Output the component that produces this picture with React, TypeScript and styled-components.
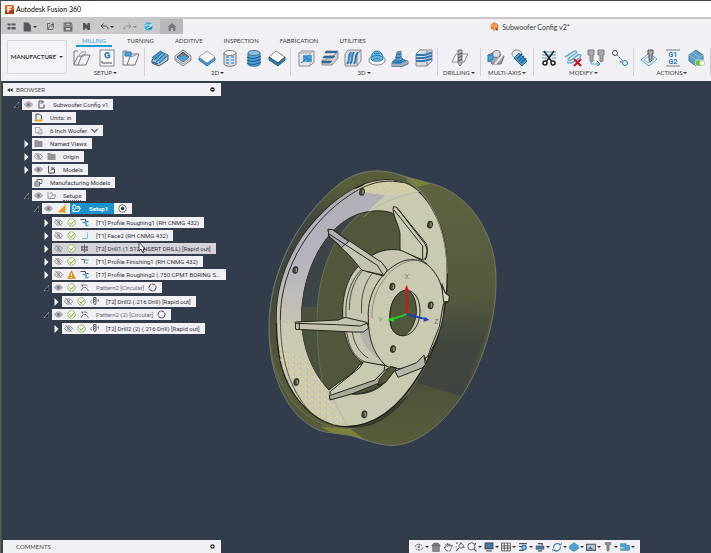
import React from 'react';
import styled, { createGlobalStyle, css } from 'styled-components';

const GlobalStyle = createGlobalStyle`
  * { box-sizing: border-box; }
  html, body { margin: 0; padding: 0; }
  body { background: #333c4a; font-family: Roboto, "Liberation Sans", Arial, sans-serif; font-size: 6px; color: #2c2c30; }
  button { font: inherit; color: inherit; background: none; border: 0; margin: 0; padding: 0; }
  ul { list-style: none; margin: 0; padding: 0; }
  svg { display: block; }
`;

const capsFont = css`
  font-family: Lato, "Liberation Sans", sans-serif;
  font-size: 6px;
  line-height: 8px;
`;

/* ---------- Layout ---------- */

const Window = styled.div`
  display: flex;
  flex-direction: column;
  min-height: 100vh;
  border-top: 1px solid #45424a;
  border-left: 1px solid #5a5d52;
`;

const TitleBar = styled.header`
  display: flex;
  align-items: center;
  gap: 2px;
  height: 18px;
  padding: 0 4px;
  background: #fff;
  border-bottom: 2px solid #c8c6cb;
  color: #000;
  font-family: Lato, "Liberation Sans", sans-serif;
  font-size: 7px;
`;

const QuickBar = styled.div`
  display: flex;
  align-items: stretch;
  height: 15px;
  background: #f1f0f4;
`;

const QuickTools = styled.div`
  display: flex;
  align-items: center;
  width: 159px;
  padding-left: 3px;
  background: #c9c8cb;
`;

const QuickButton = styled.button<{ $wide?: boolean }>`
  display: flex;
  align-items: center;
  justify-content: center;
  gap: 1px;
  width: ${p => (p.$wide ? 23 : 18)}px;
  height: 13px;
`;

const QuickCell = styled(QuickButton)`
  width: 14px;
`;

const HomeTab = styled.button`
  display: flex;
  align-items: center;
  justify-content: center;
  width: 23px;
  background: #b9b8bc;
`;

const DocTab = styled.div`
  flex: 1;
  display: flex;
  align-items: center;
  justify-content: center;
  gap: 3px;
  padding-left: 166px;
  font-family: Lato, "Liberation Sans", sans-serif;
  font-size: 7px;
  color: #38383c;
`;

const Ribbon = styled.div`
  display: grid;
  grid-template-columns: 66px 1fr;
  background: #f1f0f4;
  height: 47px;
`;

const Workspace = styled.button`
  ${capsFont}
  margin: 6px 0 7px 6px;
  display: flex;
  align-items: center;
  justify-content: center;
  gap: 3px;
  font-weight: 700;
  color: #333;
  border: 1px solid #d6d5da;
  border-radius: 2px;
  background: #f4f3f7;
`;

const Tabs = styled.nav`
  display: flex;
  gap: 9px;
  padding-left: 9px;
  height: 13px;
`;

const Tab = styled.button<{ $active?: boolean }>`
  ${capsFont}
  padding: 2px 6px 0;
  height: 13px;
  border-bottom: 2px solid ${p => (p.$active ? '#1f9bd3' : 'transparent')};
  color: ${p => (p.$active ? '#2b9bd0' : '#3c3c40')};
`;

const Groups = styled.div`
  display: grid;
  grid-template-columns: 78fr 146fr 147fr 43fr 53fr 100fr 77fr;
`;

const Group = styled.section`
  height: 28px;
  margin-top: 1px;
  border-right: 1px solid #d3d2d8;
`;

const GroupIcons = styled.div`
  display: flex;
  justify-content: space-between;
  padding: 1px 4px 0 6px;
  & > button:only-child { margin: 0 auto; }
`;

const GroupLabel = styled.button`
  ${capsFont}
  display: flex;
  align-items: center;
  justify-content: center;
  gap: 1px;
  width: 100%;
  margin-top: 2px;
  color: #3c3c40;
`;

const Caret = styled.span<{ $light?: boolean }>`
  width: 0;
  height: 0;
  border: 2px solid transparent;
  border-top-color: ${p => (p.$light ? '#8a898d' : '#333')};
  border-bottom: 0;
`;

const Viewport = styled.main`
  flex: 1;
  display: grid;
  grid-template-columns: 218px minmax(0, 1fr);
  grid-template-rows: auto 1fr auto;
  padding: 2px 0 0 1px;
  background: #333c4a;
  border-left: 1px solid #454d48;
`;

const PanelBar = styled.header`
  ${capsFont}
  display: flex;
  align-items: center;
  height: 13px;
  padding: 0 5px 0 1px;
  background: #f1f0f4;
  color: #4a4a4e;
`;

const PanelTitle = styled.span`
  flex: 1;
`;

const PanelButton = styled.button`
  display: flex;
  justify-content: center;
  width: 8px;
`;

const PanelLead = styled(PanelButton)`
  width: 12px;
`;

const Browser = styled.aside`
  grid-row: 1 / 3;
`;

const Scene = styled.section`
  grid-column: 2;
  grid-row: 1 / 3;
  padding: 77px 0 0 39px;
`;

const NavBar = styled.div`
  grid-column: 2;
  justify-self: start;
  display: flex;
  align-items: center;
  height: 13px;
  margin-left: 188px;
  padding: 0 4px;
  background: #f1f0f4;
`;

const NavButton = styled.button`
  display: flex;
  align-items: center;
  justify-content: center;
  gap: 1px;
  height: 12px;
  padding: 0 1px;
`;

/* ---------- Tree ---------- */

const Tree = styled.ul`
  margin-top: 3px;
  padding-left: 8px;
`;

const SubTree = styled.ul<{ $ops?: boolean }>`
  padding-left: 10px;
  padding-top: ${p => (p.$ops ? 1 : 0)}px;
`;

const Row = styled.div`
  display: flex;
  align-items: center;
  height: 11px;
  margin-bottom: 2px;
`;

const Expander = styled.button`
  width: 11px;
  height: 11px;
  display: flex;
  align-items: center;
  justify-content: center;
  flex: none;
`;

const ExpanderSpace = styled.span`
  width: 11px;
  flex: none;
`;

const NodeBox = styled.div<{ $hover?: boolean }>`
  position: relative;
  display: flex;
  align-items: center;
  gap: 4px;
  height: 11px;
  padding: 0 5px 0 2px;
  background: ${p => (p.$hover ? '#d6d4db' : '#f1f0f4')};
  white-space: nowrap;
`;

const Label = styled.button<{ $muted?: boolean; $dotted?: boolean }>`
  margin-left: 3px;
  line-height: 9px;
  color: ${p => (p.$muted ? '#66666a' : '#333338')};
  border-bottom: ${p => (p.$dotted ? '1px dotted #66666a' : '0')};
`;

const SelectedLabel = styled.button`
  display: flex;
  align-items: center;
  gap: 8px;
  height: 11px;
  padding: 0 6px 0 2px;
  background: #1993cf;
  color: #fff;
  font-weight: 700;
`;

const Pointer = styled.span`
  position: absolute;
  left: 86px;
  top: -2px;
`;

/* ---------- Small glyphs ---------- */

const K = '#4d4d52';
const B = '#4aa3dc';
const D = '#2a78b4';

type SvgProps = { s?: number; children: React.ReactNode };
const Svg = ({ s = 18, children }: SvgProps) => (
  <svg width={s} height={s} viewBox="0 0 18 18" fill="none" stroke={K} strokeWidth="1" aria-hidden="true">{children}</svg>
);

const glyph: Record<string, React.ReactNode> = {
  setup: <><path d="M1 5V2h4M1 5v11h12l4-10H9L5 16M1 15l4-8h4" stroke="#77777c" /><path d="M6 6l3-3h4l-2 4M7 9l5-3" stroke="#9b9ba0" /></>,
  gcode: <><rect x="2" y="1" width="14" height="16" fill="#fafafc" stroke="#88888d" /><path d="M4 12v2h10" /><path d="M11.500 4.500C9.500 3 7 4 7 6.200s3 3.300 4.500 1.800V6.300H9.500" stroke={D} strokeWidth="1.500" /></>,
  stockSetup: <><path d="M1 5V2h4M1 5v11h12l4-11H9L5 16" stroke="#77777c" /><path d="M3 3h6v4H3z" fill={B} stroke={D} /><path d="M9 8l5-2" stroke="#9b9ba0" /></>,
  adaptive: <><path d="M1 11l9-8 7 3v5l-9 6-7-3z" fill="#b7cbd9" /><path d="M1 9l9-7M3 11l9-8M5 13l9-8M8 14l8-7M2 13l5 2" stroke={D} strokeWidth="1.500" /><path d="M3 9l8-7M5 11l8-7M8 12l8-7" stroke={B} /></>,
  pocket: <><path d="M9 1l8 6v4l-8 6-8-6V7z" fill="#dcdce0" stroke="#86868b" /><path d="M9 3l6 5-6 5-6-5z" fill="#6c7f8c" /><path d="M4 8l5 4 5-4M6 8l3 3 3-3M7 7l2 2 2-2" stroke={B} strokeWidth="1.500" /><path d="M1 9l8 6 8-6" stroke="#9a9aa0" /></>,
  face: <><path d="M9 2l8 6-8 6-8-6z" fill="#fbfbfd" stroke="#a0a0a6" /><path d="M1 9l8 6 8-6v2l-8 6-8-6z" fill={B} stroke={D} /></>,
  cylinder: <><path d="M3 4v11c0 3 12 3 12 0V4" fill="#dcdce1" stroke="#77777c" /><ellipse cx="9" cy="4" rx="6" ry="2.500" fill="#f8f8fa" stroke="#77777c" /><path d="M5 8h3m2 0h3M5 11h3m2 0h3M5 14h3m2 0h3" stroke={B} strokeWidth="1.500" /></>,
  thread: <><path d="M3 4v11c0 3 12 3 12 0V4" fill={B} stroke={D} /><ellipse cx="9" cy="4" rx="6" ry="2.500" fill="#83c4ea" stroke="#5c6e7c" /><path d="M2 8c3 2 9 2 14-1M2 11c3 2 9 2 14-1M2 14c3 2 9 2 14-1" stroke="#1c527c" /></>,
  chamfer: <><path d="M8 2l9 6-7 6-9-6z" fill="#fdfdfe" stroke="#88888d" /><path d="M1 8l9 6 7-6v3l-7 6-9-6z" fill={D} stroke="#396279" /></>,
  pocket3d: <><path d="M2 4l3-2h12v11l-4 4H2z" fill="#e8e8ec" stroke="#8a8a90" /><path d="M2 4h11v13M13 4l4-2" stroke="#a2a2a8" /><path d="M6 6h9v7H6z" fill={B} stroke="none" /><path d="M6 8h4l2-2M7 11l4-2v4l3-3M4 14l5-4" stroke={D} /></>,
  parallelSteps: <><path d="M1 16h10l6-7V3l-5 4H8l-3 4H1z" fill="#d0d0d5" stroke="#8a8a90" /><path d="M5 2h12l-2 2H4zM3 7h11l-2 2H2zM1 12h10l-2 2H1z" fill={D} stroke="#35495a" strokeWidth=".5" /></>,
  parallel: <><path d="M1 5l3-4h13v11l-4 5H1z" fill="#dfdfe4" stroke="#8a8a90" /><path d="M13 5v12M13 5l4-4" stroke="#8a8a90" /><path d="M3 15c4-4 0-7 4-12M6 15c4-4 0-7 4-12M10 15c3-4 0-7 4-12" stroke={D} strokeWidth="2" /><path d="M4 13c3-4 1-6 4-10" stroke={B} /></>,
  dome: <><path d="M1 11c0-3 3-4 8-4s8 1 8 4-3 5-8 5-8-2-8-5z" fill="#f8f8fb" stroke="#818188" /><path d="M3 10c0-5 3-8 6-8s6 3 6 8c-2 3-10 3-12 0z" fill="#6cb8e4" stroke={D} /><path d="M4 8c2-2 8-2 10 0M6 5c1-1 5-1 6 0M5 11c2-2 6-2 8 0" stroke={D} /></>,
  ramp: <><path d="M1 13l4-3 1-7 4-1v6l3 3 4 1v3l-7 3H1z" fill={B} stroke="#717980" /><path d="M4 8c3 2 6 0 6-1M3 11c3 2 8 1 9-1M2 13c5 2 9 0 12-2M6 5h4" stroke="#205f90" /><path d="M1 16h9l7-3" stroke="#aaaab0" strokeWidth="2" /></>,
  contour: <><path d="M1 5l4-4h12v11l-5 5H1z" fill="#dcdce1" stroke="#8a8a90" /><path d="M1 6h8c3 0 4-2 8-2M1 9h7c4 0 5-2 9-2M1 12h7c4 0 5-2 9-2" stroke={D} strokeWidth="2" /><path d="M12 13v4M12 2v2" stroke="#77777d" /></>,
  drill: <><path d="M1 13l4-8h12l-4 8z" fill="#fafafc" stroke="#88888d" /><path d="M7 1h4v13l-2 3-2-3z" fill="#b4b4ba" stroke="#77777c" /><path d="M7 6l4-2M7 9l4-2M7 12l4-2" stroke="#4a4a50" /></>,
  swarf: <><path d="M1 6l5-2 11 3-3 8H5z" fill="#9fa4aa" stroke="#66666b" /><path d="M1 6h6l-2 5-4 2z" fill={B} stroke={D} /><path d="M6 3c2-2 6-2 7 0v4c-2 2-6 2-7 0z" fill="#dcdce0" stroke="#77777c" /><path d="M8 15l8-9" stroke="#e9e9ed" strokeWidth="2" /></>,
  multiAxis: <><ellipse cx="6" cy="5" rx="5" ry="4" fill="#e9e9ed" stroke="#88888d" /><path d="M8 4l8 8-5 5-8-8z" fill={B} stroke="#3a6f93" /><path d="M6 10l5-5M8 12l5-5M10 14l5-5" stroke="#1e5d8e" strokeWidth="1.500" /></>,
  trim: <><path d="M2 3h14M2 6h14M2 9h5m5 0h4" stroke="#7dbbe0" strokeWidth="1.500" /><path d="M4 2l8 11M14 2L6 13" stroke="#222" strokeWidth="1.500" /><circle cx="5" cy="14" r="2" stroke="#222" strokeWidth="1.500" /><circle cx="13" cy="14" r="2" stroke="#222" strokeWidth="1.500" /></>,
  deletePass: <><path d="M1 8l8-5c3-2 5 0 2 2L5 9c-2 2 0 3 2 2l7-5c3-1 4 1 1 3l-6 4c-2 2-4 1-6 0" stroke="#62a9d6" strokeWidth="1.500" /><path d="M10 10l7 7M17 10l-7 7" stroke="#d2141c" strokeWidth="2" /></>,
  toolPair: <><path d="M1 1h6v5H6v6l-2 1-1-1V6H1zM11 1h6v5h-1v6l-2 1-1-1V6h-2z" fill="#a7a7ad" stroke="#7c7c81" /><path d="M4 13v2h9" stroke={B} /><path d="M10 12l3 3-3 2" stroke={D} /></>,
  linkPoints: <><circle cx="4" cy="4" r="2.500" /><circle cx="14" cy="14" r="2.500" stroke={D} /><path d="M6 6l6 6M9 13l2-2M11 13h-3" stroke={D} strokeDasharray="2 1" /></>,
  simulate: <><path d="M1 11l8-7 8 6-8 7z" fill="#eef6fb" stroke={B} /><path d="M4 11l5-4 5 3-5 4z" stroke="#77b9df" /><path d="M8 1h5v4h-1v6l-2 2-1-2V5H8z" fill="#a7a7ad" stroke="#55555a" /></>,
  post: <><path d="M2 1h14M2 17h14" stroke="#77777d" /><text x="9" y="8" textAnchor="middle" fontSize="7" fontWeight="700" fill={D} stroke="none">G1</text><text x="9" y="15" textAnchor="middle" fontSize="7" fontWeight="700" fill={D} stroke="none">G2</text></>,
  machine: <><path d="M1 6l7-5 7 5v6l-7 5-7-5z" fill="#5d9fc6" stroke="#457c9e" /><path d="M1 6l7 5 7-5M8 11v5M4 3l7 5" stroke="#8ac1df" /><rect x="7" y="11" width="10" height="6" rx="3" fill="#67c02f" stroke="#fff" strokeWidth=".5" /><circle cx="14" cy="14" r="2.500" fill="#fff" stroke="#b9b9bd" strokeWidth=".5" /></>,

  grid: <path d="M1 3h6v4H1zM9 3h8v4H9zM1 10h6v5H1zM9 10h8v5H9z" fill="#55555a" stroke="none" />,
  file: <path d="M3 1h8l5 5v11H3z" fill="#55555a" stroke="none" />,
  open: <path d="M3 15V3h5l2 2h5M4 15l3-7h9l-3 7zM12 1l4 3-4 2" strokeWidth="1.500" />,
  save: <path d="M2 2h12l2 2v12H2zM5 3v4h8V3M4 16v-6h10v6" stroke="#66666b" strokeWidth="2" />,
  saved: <path d="M2 2h5v3h4V2h5v14h-5l-3-4-3 4H2z" fill="#55555a" stroke="none" />,
  undo: <path d="M7 3L2 8l5 5M2 8h9c4 0 5 3 5 7" strokeWidth="2" />,
  redo: <path d="M11 3l5 5-5 5M16 8H7c-4 0-5 3-5 7" stroke="#8f8e93" strokeWidth="2" />,
  globe: <><circle cx="9" cy="9" r="8" fill="#33a9dc" stroke="none" /><path d="M2 8l6-3 2 2 6-2-3 5-5 1-2 3" stroke="#e9f7fd" strokeWidth="2" /><path d="M10 14l6-3" stroke="#175a87" strokeWidth="2" /></>,
  home: <path d="M9 2l8 7h-2v7h-4v-5H7v5H3V9H1z" fill="#77767b" stroke="none" />,
  logo: <><rect x="0" y="0" width="18" height="18" rx="3" fill="#e8601c" stroke="none" /><path d="M0 12l18-3v9H0z" fill="#a63c10" stroke="none" /><path d="M6 15V4h7M6 9h6" stroke="#fff" strokeWidth="3" /></>,
  box: <><path d="M2 5l7-4 7 4v8l-7 4-7-4z" fill="#ee8b45" stroke="#d8652a" /><path d="M2 5l7 4 7-4M9 9v8" stroke="#fbd3b4" /><path d="M11 11l6 5-4 1z" fill="#444" stroke="none" /></>,

  eye: <><path d="M1 9c4-7 12-7 16 0-4 7-12 7-16 0z" fill="#b5b4ba" stroke="#a09fa5" strokeWidth="2" /><circle cx="9" cy="9" r="3" fill="#77777d" stroke="none" /></>,
  eyeOff: <><path d="M1 9c4-7 12-7 16 0-4 7-12 7-16 0z" stroke="#8b8a90" strokeWidth="2" /><circle cx="9" cy="9" r="2.500" stroke="#8b8a90" strokeWidth="2" /><path d="M3 2l12 14" stroke="#8b8a90" strokeWidth="2" /></>,
  check: <><circle cx="9" cy="9" r="7.500" fill="#f3f8e8" stroke="#8eb85a" strokeWidth="2" strokeDasharray="5 1" /><path d="M5 9l3 4 7-8" stroke="#7dab45" strokeWidth="2" /></>,
  warn: <><path d="M9 1l8 16H1z" fill="#ee921c" stroke="#e18a18" /><path d="M9 7v5M9 14v2" stroke="#fff" strokeWidth="2" /></>,
  corner: <path d="M17 1v16H1z" fill="#f0981f" stroke="none" />,
  folder: <path d="M1 2h6l2 2h8v12H1z" fill="#949398" stroke="none" />,
  doc: <path d="M4 15V2h8v4M3 16h8M14 9v7h-3M7 6h4" strokeWidth="2" stroke="#4c4c50" />,
  units: <><path d="M4 13V2h7l4 4v7" strokeWidth="2" stroke="#4c4c50" /><path d="M1 15h16" stroke="#d3ae1c" strokeWidth="4" /></>,
  config: <><path d="M3 3h9v11H3zM12 7h4v9H9" strokeWidth="1.500" stroke="#9a999e" /><path d="M6 14l4-3" /></>,
  models: <path d="M3 2v14h12V8h-5V3M7 11l4-3 4-3" strokeWidth="2" stroke="#4c4c50" />,
  mfg: <path d="M2 8h9v8H2zM6 8V3h10v6M11 11h5M3 12h7" strokeWidth="2" stroke="#66666b" />,
  setups: <path d="M2 2v13h13l2-7h-6l-5 7M5 5l4-2 2 4" strokeWidth="1.500" stroke="#77777c" />,
  setupWhite: <path d="M2 2h5v3M2 2v13h11l4-7H7l-5 7M9 5h6v3" stroke="#fff" strokeWidth="2" />,
  rough: <><path d="M1 3h10v4h6" stroke="#55555a" strokeWidth="2" /><path d="M5 9h7v6h5" stroke={B} strokeWidth="3" /></>,
  facing: <><path d="M4 15h10" stroke="#aaa" /><path d="M15 3v12H5" stroke="#7fc6ee" strokeWidth="2" /></>,
  hole: <><path d="M9 1v16M4 4v10M14 4v10M2 6h14M2 12h14" strokeWidth="2" stroke="#55555a" /><path d="M9 4l4 4M5 9l6 6" strokeWidth="2" stroke="#77777c" /></>,
  finish: <><path d="M2 5h7v8" stroke="#77777c" strokeWidth="2" /><path d="M10 6h7M11 12h5" stroke={B} strokeWidth="2" /></>,
  pattern: <path d="M2 4h3v3M4 6c4-3 7-3 11 0M6 9l-4 7M12 9l5 7M7 9h5" strokeWidth="1.500" stroke="#55555a" />,
  drillSmall: <><path d="M7 1h5v11l-2 4-3-4zM7 6l5-3M7 10l5-3" strokeWidth="2" stroke="#66666b" /><path d="M5 6L1 9l2 4M14 7l3-2v5" stroke="#4f7fa3" strokeWidth="1.500" /></>,
  chevron: <path d="M1 5l8 8 8-8" stroke="#66666b" strokeWidth="3" />,
  ring: <circle cx="9" cy="9" r="7" stroke="#444448" strokeWidth="2" strokeDasharray="9 1" />,
  target: <><circle cx="9" cy="9" r="7.500" stroke="#444448" strokeWidth="1.500" fill="#fff" /><circle cx="9" cy="9" r="3.500" fill="#2a2a2e" stroke="none" /></>,
  minus: <><circle cx="9" cy="9" r="8" fill="#29292d" stroke="none" /><path d="M5 9h8" stroke="#fff" strokeWidth="3" /></>,
  plus: <><circle cx="9" cy="9" r="8" fill="#29292d" stroke="none" /><path d="M5 9h8M9 5v8" stroke="#fff" strokeWidth="3" /></>,
  rewind: <path d="M9 3v12L1 9zM17 3v12L9 9z" fill="#29292d" stroke="none" />,

  orbit: <path d="M2 9c0-5 9-7 13-2M16 10c-1 5-9 6-13 2M9 6v6M6 9h6" strokeWidth="1.500" strokeDasharray="5 1" />,
  look: <path d="M3 6h12v11H3zM1 7l4-5h8l4 5z" fill="#85858a" stroke="#55555a" />,
  pan: <path d="M6 16l-4-7 3 1V4l3 4V2l3 6 1-5 2 5 3-3-4 11z" strokeDasharray="4 1" strokeWidth="1.500" />,
  zoom: <><path d="M2 16l5-5M2 2h3M9 2h3M16 8v3M2 8v2" strokeWidth="2" /><circle cx="11" cy="7" r="4" strokeWidth="1.500" /></>,
  fit: <><circle cx="8" cy="8" r="6.500" strokeWidth="1.500" /><path d="M13 13l4 4M15 2v3" strokeWidth="2" /></>,
  display: <><path d="M2 2h14v10H2z" fill="#4778a6" stroke="#3b4857" strokeWidth="2" /><path d="M4 16h10" strokeWidth="2" /></>,
  table: <path d="M1 2h16v14H1zM1 7h16M1 11h16M6 2v14M12 2v14" strokeWidth="1.500" />,
  inspect: <><path d="M2 3h14M2 8h9M2 15h8" strokeWidth="2" /><circle cx="11" cy="10" r="4" fill="#96c5e1" stroke={D} strokeWidth="2" /></>,
  stock: <><path d="M2 7h14v6H2z" fill="#4778a6" stroke="#3b4857" /><path d="M5 3h8v3M5 16h8" strokeWidth="2" /></>,
  cycle: <><path d="M15 5A7 7 0 0 0 3 11M3 14a7 7 0 0 0 12-6" stroke={D} strokeWidth="2" /><path d="M12 5h5V1M6 13H1v4" stroke="#55555a" /></>,
  diamond: <path d="M9 1l8 6v5l-8 5-8-5V7z" fill="#4ca2d6" stroke="#387ba6" />,
  image: <><path d="M1 4h16v11H1z" fill="#bcc8cf" stroke="#55555a" strokeWidth="2" /><path d="M3 13l5-5 5 5" fill={D} stroke="none" /></>,
  tool: <path d="M4 1h10v4h-3v10l-2 2-2-2V5H4z" fill="#8b8b91" stroke="#66666b" />,
  flag: <path d="M1 3h10v3h6v9H1v-3h8V9H1z" fill={B} stroke="#36739b" />,
};

const Glyph = ({ name, s }: { name: string; s?: number }) => <Svg s={s}>{glyph[name]}</Svg>;

/* ---------- Data ---------- */

const tabs = ['MILLING', 'TURNING', 'ADDITIVE', 'INSPECTION', 'FABRICATION', 'UTILITIES'];

const groups: { label: string; icons: string[] }[] = [
  { label: 'SETUP', icons: ['setup', 'gcode', 'stockSetup'] },
  { label: '2D', icons: ['adaptive', 'pocket', 'face', 'cylinder', 'thread', 'chamfer'] },
  { label: '3D', icons: ['pocket3d', 'parallelSteps', 'parallel', 'dome', 'ramp', 'contour'] },
  { label: 'DRILLING', icons: ['drill'] },
  { label: 'MULTI-AXIS', icons: ['swarf', 'multiAxis'] },
  { label: 'MODIFY', icons: ['trim', 'deletePass', 'toolPair', 'linkPoints'] },
  { label: 'ACTIONS', icons: ['simulate', 'post', 'machine'] },
];

type TreeNode = {
  label: string;
  icons: string[];
  open?: boolean;
  closed?: boolean;
  after?: string;
  hover?: boolean;
  muted?: boolean;
  dotted?: boolean;
  selected?: boolean;
  ops?: boolean;
  children?: TreeNode[];
};

const tree: TreeNode = {
  label: 'Subwoofer Config v1', icons: ['eye', 'doc'], open: true, children: [
    { label: 'Units: in', icons: ['units'] },
    { label: '6 Inch Woofer', icons: ['config'], after: 'chevron' },
    { label: 'Named Views', icons: ['folder'], closed: true },
    { label: 'Origin', icons: ['eyeOff', 'folder'], closed: true },
    { label: 'Models', icons: ['eye', 'models'], closed: true },
    { label: 'Manufacturing Models', icons: ['mfg'] },
    {
      label: 'Setups', icons: ['eye', 'setups'], open: true, dotted: true, children: [
        {
          label: 'Setup1', icons: ['eye', 'corner'], open: true, selected: true, ops: true, after: 'target', children: [
            { label: '[T1] Profile Roughing1 (RH CNMG 432)', icons: ['eyeOff', 'check', 'rough'], closed: true },
            { label: '[T1] Face2 (RH CNMG 432)', icons: ['eyeOff', 'check', 'facing'], closed: true },
            { label: '[T2] Drill1 (1.512 INSERT DRILL) [Rapid out]', icons: ['eyeOff', 'check', 'hole'], closed: true, hover: true },
            { label: '[T1] Profile Finishing1 (RH CNMG 432)', icons: ['eyeOff', 'check', 'finish'], closed: true },
            { label: '[T7] Profile Roughing2 (.750 CPMT BORING S...', icons: ['eyeOff', 'warn', 'rough'], closed: true },
            {
              label: 'Pattern2 [Circular]', icons: ['eye', 'check', 'pattern'], open: true, muted: true, ops: true, after: 'ring', children: [
                { label: '[T2] Drill2 (.216 Drill) [Rapid out]', icons: ['eyeOff', 'check', 'drillSmall'], closed: true },
              ],
            },
            {
              label: 'Pattern2 (2) [Circular]', icons: ['eye', 'check', 'pattern'], open: true, muted: true, ops: true, after: 'ring', children: [
                { label: '[T2] Drill2 (2) (.216 Drill) [Rapid out]', icons: ['eyeOff', 'check', 'drillSmall'], closed: true },
              ],
            },
          ],
        },
      ],
    },
  ],
};

const nav: { icon: string; menu?: boolean }[] = [
  { icon: 'orbit', menu: true }, { icon: 'look' }, { icon: 'pan' }, { icon: 'zoom' },
  { icon: 'fit', menu: true }, { icon: 'display', menu: true }, { icon: 'table', menu: true },
  { icon: 'inspect', menu: true }, { icon: 'stock', menu: true }, { icon: 'cycle', menu: true },
  { icon: 'diamond', menu: true }, { icon: 'image', menu: true }, { icon: 'tool', menu: true },
  { icon: 'flag', menu: true },
];

/* ---------- Components ---------- */

const TreeItem = ({ node }: { node: TreeNode }) => (
  <li>
    <Row>
      {node.open && (
        <Expander aria-label="Collapse">
          <svg width="5" height="6" viewBox="0 0 5 6"><path d="M5 0v6H0z" fill="#16181c" stroke="#c9cbd0" strokeWidth=".6" /></svg>
        </Expander>
      )}
      {node.closed && (
        <Expander aria-label="Expand">
          <svg width="5" height="8" viewBox="0 0 5 8"><path d="M.5 0l4 4-4 4z" fill="#f4f4f6" /></svg>
        </Expander>
      )}
      {!node.open && !node.closed && <ExpanderSpace />}
      <NodeBox $hover={node.hover}>
        {node.icons.map(i => <Glyph key={i} name={i} s={9} />)}
        {node.selected
          ? <SelectedLabel><Glyph name="setupWhite" s={9} />{node.label}</SelectedLabel>
          : <Label $muted={node.muted} $dotted={node.dotted}>{node.label}</Label>}
        {node.after && <Glyph name={node.after} s={node.after === 'chevron' ? 7 : 9} />}
        {node.hover && (
          <Pointer>
            <svg width="8" height="12" viewBox="0 0 8 12"><path d="M1 1v9l2-2 2 4 1-1-1-3h2z" fill="#fff" stroke="#222" strokeWidth=".8" /></svg>
          </Pointer>
        )}
      </NodeBox>
    </Row>
    {node.children && (
      <SubTree $ops={node.ops}>
        {node.children.map(c => <TreeItem key={c.label} node={c} />)}
      </SubTree>
    )}
  </li>
);

const holes: [number, number][] = [[306, 96], [510, 194], [106, 330], [397, 380], [512, 436], [399, 567], [109, 666], [313, 763]];

const ringPath = 'M50 480C48 300 160 165 260 100C345 45 440 42 500 120C545 180 562 260 562 340C562 450 540 550 480 640C420 740 345 800 255 800C170 795 90 720 62 610C52 560 48 520 50 480Z';
const borePath = 'M125 450C135 300 215 180 310 158C350 149 380 152 398 160L424 200L440 290L330 620L300 612C275 650 240 660 207 690C160 640 120 560 125 450Z';
const stockPath = 'M27 500C27 330 120 165 240 70C300 25 370 25 430 48L510 70C620 95 705 210 708 350C712 500 650 650 590 730C520 820 450 860 385 856C340 852 300 832 262 825L190 815C80 780 25 640 27 500Z';

const Wheel = () => (
  <svg width="250" height="300" viewBox="0 0 750 900" role="img" aria-label="Subwoofer ring model">
    <defs>
      <linearGradient id="stock" x1="0" y1="0" x2="0" y2="1">
        <stop offset="0" stopColor="#5e6440" /><stop offset=".55" stopColor="#50573c" /><stop offset=".7" stopColor="#484e3b" /><stop offset="1" stopColor="#585d3a" />
      </linearGradient>
      <linearGradient id="shade" x1="0" y1="0" x2="0" y2="1">
        <stop offset="0" stopColor="#3f4440" stopOpacity="0" /><stop offset=".5" stopColor="#3f4440" stopOpacity=".8" /><stop offset="1" stopColor="#3f4440" />
      </linearGradient>
      <linearGradient id="lip" x1="0" y1="0" x2="0" y2="1">
        <stop offset="0" stopColor="#5a5f3a" /><stop offset=".08" stopColor="#565b39" /><stop offset=".2" stopColor="#3f4542" /><stop offset=".45" stopColor="#42483d" /><stop offset=".8" stopColor="#555a39" /><stop offset="1" stopColor="#5a5f38" />
      </linearGradient>
      <linearGradient id="lilac" x1="0" y1="0" x2="0" y2="1">
        <stop offset="0" stopColor="#aeabb2" /><stop offset=".65" stopColor="#b8b5bf" /><stop offset="1" stopColor="#c6c4b2" />
      </linearGradient>
      <pattern id="speckle" width="19" height="17" patternUnits="userSpaceOnUse">
        <path d="M2 3h4v4H2zM12 9h4v4h-4z" fill="#e8e08a" /><path d="M8 13h3v3H8z" fill="#b9a7a0" />
      </pattern>
      <pattern id="grain" width="13" height="11" patternUnits="userSpaceOnUse">
        <path d="M1 2h3v3H1zM8 7h3v3H8z" fill="#6a6444" opacity=".35" />
      </pattern>
      <clipPath id="ringClip"><path d={ringPath} /></clipPath>
      <clipPath id="boreClip"><path d={borePath} /></clipPath>
      <clipPath id="stockClip"><path d={stockPath} /></clipPath>
    </defs>

    <path d={stockPath} fill="url(#stock)" />
    <g clipPath="url(#stockClip)">
      <path d="M570 440L720 400L610 710L460 665Z" fill="url(#shade)" />
      <path d="M470 0H750V560L560 440Z" fill="url(#grain)" />
      <path d="M350 30L520 70L470 80Z" fill="#7b8236" />
      <path d="M180 800L270 806L330 850L240 830Z" fill="#7c823a" />
      <path d="M27 500C27 330 120 165 240 70C300 25 400 15 460 70C540 140 563 250 563 340C563 560 430 800 265 806C140 810 27 690 27 500Z" fill="url(#lip)" stroke="#7b8070" strokeWidth="2" />
    </g>
    <path d={stockPath} fill="none" stroke="#737968" strokeWidth="3" />

    <path d="M255 800C330 812 395 770 440 710C400 745 340 795 265 792Z" fill="#3c4033" stroke="#22241d" strokeWidth="2" />
    <path d={ringPath} fill="#cac9b2" stroke="#1d1f18" strokeWidth="4" />
    <g clipPath="url(#ringClip)">
      <path d="M0 0H250L290 93L376 106L260 210L130 490H0Z" fill="url(#lilac)" />
      <path d="M290 93L340 50L440 55L478 95L376 106Z" fill="#cfcea9" />
      <path d="M50 560L130 590L200 690L255 800H40Z" fill="url(#speckle)" />
      <path d="M330 60H450L430 90H310Z" fill="url(#speckle)" opacity=".6" />
      <path d="M61 480C60 310 165 175 265 108C320 70 370 55 430 68" fill="none" stroke="#282a22" strokeWidth="3" />
      <path d="M61 480C62 600 90 690 150 755" fill="none" stroke="#55564a" strokeWidth="3" />
      <path d="M205 690L262 800" stroke="#aaa996" strokeWidth="2" />
    </g>

    <path d={borePath} fill="#50573a" stroke="#22241c" strokeWidth="3" />
    <g clipPath="url(#boreClip)">
      <path d="M120 140H320C220 210 165 350 172 500C172 570 180 630 190 680L100 640Z" fill="#3d4448" />
      <path d="M110 440H172C172 540 178 600 190 680L100 640Z" fill="#4a513c" />
      <path d="M320 150C220 210 165 350 172 500C172 570 180 630 190 680" fill="none" stroke="#777d68" strokeWidth="2" />
    </g>
    <path d="M478 95C420 105 345 135 312 170" fill="none" stroke="#aeb09c" strokeWidth="2" />
    <path d="M440 60C530 120 560 230 562 340" fill="none" stroke="#8b9078" strokeWidth="3" />

    <g stroke="#24261e" strokeWidth="3" strokeLinejoin="round">
      <path d="M248 450C250 380 275 330 310 308C340 275 380 262 430 272L500 310L400 620L310 608C268 590 247 520 248 450Z" fill="#c7c6b0" />
      <path d="M258 470C254 390 285 335 335 305M268 450C268 380 295 330 350 298M305 460C300 400 320 345 360 320M258 500C264 560 282 592 312 604M274 500C280 550 298 580 325 594" fill="none" stroke="#4b4c40" strokeWidth="3" />
      <path d="M300 520C310 560 340 592 375 605L330 500Z" fill="#b5b2ad" stroke="none" />
      <path d="M400 140C395 160 415 190 420 220V270L470 292L490 300L500 292L502 270L495 252L410 142Z" fill="#cac9b2" />
      <path d="M402 150L488 258L488 298M410 142L498 250C505 265 500 285 496 300" fill="none" />
      <path d="M325 475C320 395 370 325 430 303C490 285 535 330 550 400C562 470 530 550 500 592C465 618 410 640 375 615C340 580 325 535 325 475Z" fill="#cac9b2" />
      <path d="M336 475C332 400 378 330 435 308C455 299 480 300 496 307" fill="none" stroke="#6b6b5b" strokeWidth="2" />
      <path d="M204 208L218 209L366 308L382 330L370 348L305 330L272 290L207 228Z" fill="#c4c3b1" />
      <path d="M204 208L218 209L266 245L245 262L207 228Z" fill="#b0adb5" />
      <path d="M204 220L352 316L370 345M318 334L370 345" fill="none" />
      <path d="M106 486L235 480L255 472L320 487L326 504L310 516H280L107 508Z" fill="#c4c3b0" />
      <path d="M106 490L230 494L300 498L326 488M118 487V508" fill="none" />
      <path d="M210 695L300 622L310 605L375 617L370 640L345 668L210 718Z" fill="#cac9b2" />
      <path d="M208 707L345 660L372 632L395 620L410 625L370 672C340 700 300 704 275 702L210 720Z" fill="#a9a899" />
      <path d="M275 702C310 702 350 690 372 668L350 672Z" fill="#50573a" />
      <path d="M390 620L410 624L376 668L352 676L360 655Z" fill="#50573a" />
      <path d="M405 633L470 608L492 585L496 614L486 624L414 652Z" fill="#b7b5a9" />
      <path d="M545 370L556 400L568 408L566 425L550 432L538 500L510 570L500 610L494 590" fill="none" />
      <path d="M545 375L556 400L568 408L566 425L551 425Z" fill="#d6d5c0" />
      <path d="M390 475C388 430 410 392 440 391C465 392 482 420 480 460C476 505 450 530 424 527C402 523 390 505 390 475Z" fill="#c7c6af" />
      <path d="M390 475C388 430 410 392 438 391C460 393 470 425 469 460C464 500 445 526 424 527C402 523 390 505 390 475Z" fill="#50573a" />
    </g>

    {holes.map(([x, y]) => (
      <g key={`${x}-${y}`} transform={`translate(${x} ${y})`}>
        <ellipse rx="7" ry="10" fill="#4a4e38" stroke="#24261e" strokeWidth="3" transform="rotate(12)" />
        <path d="M3 -6V6" stroke="#b4b39e" strokeWidth="3" />
      </g>
    ))}

    <path d="M440 465V385" stroke="#e0101c" strokeWidth="6" />
    <path d="M440 374l7 18h-14z" fill="#e0101c" />
    <path d="M440 463L398 477" stroke="#1ee01e" strokeWidth="5" />
    <path d="M383 480l17-10 3 15z" fill="#1ee01e" />
    <path d="M440 463L492 476" stroke="#1a3db8" strokeWidth="5" />
    <path d="M508 480l-18 5 4-15z" fill="#1a3db8" />
    <g fontSize="20" fontFamily="Liberation Sans, sans-serif">
      <text x="434" y="357" fill="#9b6a80">X</text>
      <text x="355" y="487" fill="#48a83c">Y</text>
      <text x="523" y="492" fill="#6470a0">Z</text>
    </g>
  </svg>
);

export default function App() {
  return (
    <Window>
      <GlobalStyle />
      <TitleBar><Glyph name="logo" s={9} />Autodesk Fusion 360</TitleBar>
      <QuickBar>
        <QuickTools>
          <QuickCell aria-label="Data panel"><Glyph name="grid" s={9} /></QuickCell>
          <QuickButton $wide aria-label="File"><Glyph name="file" s={10} /><Caret /></QuickButton>
          <QuickButton aria-label="Open"><Glyph name="open" s={9} /></QuickButton>
          <QuickButton aria-label="Save"><Glyph name="save" s={10} /></QuickButton>
          <QuickButton aria-label="Versions"><Glyph name="saved" s={9} /></QuickButton>
          <QuickButton $wide aria-label="Undo"><Glyph name="undo" s={9} /><Caret /></QuickButton>
          <QuickButton $wide aria-label="Redo"><Glyph name="redo" s={9} /><Caret $light /></QuickButton>
          <QuickCell aria-label="Online status"><Glyph name="globe" s={9} /></QuickCell>
        </QuickTools>
        <HomeTab aria-label="Home"><Glyph name="home" s={10} /></HomeTab>
        <DocTab><Glyph name="box" s={9} />Subwoofer Config v2*</DocTab>
      </QuickBar>
      <Ribbon>
        <Workspace>MANUFACTURE<Caret /></Workspace>
        <div>
          <Tabs>
            {tabs.map((t, i) => <Tab key={t} $active={i === 0}>{t}</Tab>)}
          </Tabs>
          <Groups>
            {groups.map(g => (
              <Group key={g.label}>
                <GroupIcons>
                  {g.icons.map(i => <button key={i} aria-label={i}><Glyph name={i} /></button>)}
                </GroupIcons>
                <GroupLabel>{g.label}<Caret /></GroupLabel>
              </Group>
            ))}
          </Groups>
        </div>
      </Ribbon>
      <Viewport>
        <Browser>
          <PanelBar>
            <PanelLead aria-label="Collapse browser"><Glyph name="rewind" s={6} /></PanelLead>
            <PanelTitle>BROWSER</PanelTitle>
            <PanelButton aria-label="Hide"><Glyph name="minus" s={5} /></PanelButton>
          </PanelBar>
          <Tree><TreeItem node={tree} /></Tree>
        </Browser>
        <Scene><Wheel /></Scene>
        <PanelBar>
          <PanelLead as="span" />
          <PanelTitle>COMMENTS</PanelTitle>
          <PanelButton aria-label="Add comment"><Glyph name="plus" s={5} /></PanelButton>
        </PanelBar>
        <NavBar>
          {nav.map(n => (
            <NavButton key={n.icon} aria-label={n.icon}>
              <Glyph name={n.icon} s={10} />
              {n.menu && <Caret />}
            </NavButton>
          ))}
        </NavBar>
      </Viewport>
    </Window>
  );
}
